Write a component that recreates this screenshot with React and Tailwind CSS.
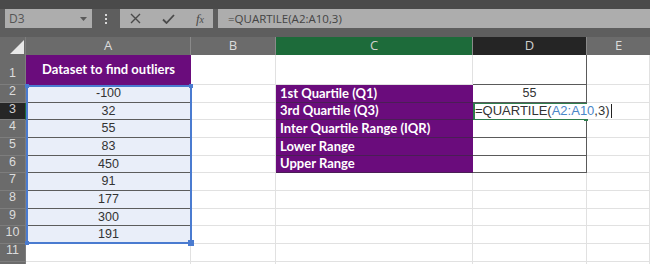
import React from "react";

const HDR = "bg-[#6b6b6b] text-[#dcdcdc]";

function RowHead({ n, dark, h }) {
  return (
    <div
      className={`w-[26px] shrink-0 flex items-end justify-center pb-[1px] border-b border-r border-[#7d7d7d] text-[12.5px] ${
        dark ? "bg-[#262626] text-[#d0d0d0] border-r-[#1d6b3a]" : HDR
      } ${h}`}
    >
      {n}
    </div>
  );
}

const gridCell = "border-b border-r border-[#e1e1e1] bg-white";
const A_CELL = "w-[165px] shrink-0 bg-[#e9eef9] border-b border-[#5c5c5c] flex items-center justify-center text-[12.5px] text-[#333]";
const PURPLE = "w-[197px] shrink-0 bg-[#6a0c7c] border-b border-[#4a1e55] flex items-center pl-[4px] text-white font-bold text-[13px]";
const D_BOX = "w-[114px] shrink-0 bg-white border-b border-r border-[#5a5a5a] flex items-center justify-center text-[12.5px] text-[#333]";

export default function App() {
  const data = ["-100", "32", "55", "83", "450", "91", "177", "300", "191"];
  const cLabels = [
    "1st Quartile (Q1)",
    "3rd Quartile (Q3)",
    "Inter Quartile Range (IQR)",
    "Lower Range",
    "Upper Range",
  ];
  const rh = "h-[17.67px]";
  return (
    <div
      className="w-[650px] h-[264px] overflow-hidden bg-white relative flex flex-col"
      style={{ fontFamily: '"Liberation Sans", Arial, sans-serif' }}
    >
      {/* top strip */}
      <div className="h-[9px] bg-[#4a4a4a] shrink-0" />
      {/* formula bar */}
      <div className="h-[28px] bg-[#5e5e5e] shrink-0 flex items-start">
        <div className="ml-[5px] w-[87px] h-[19px] bg-[#adadad] flex items-center justify-between pl-[4px] pr-[5px]">
          <span className="text-[12px] text-[#555]" style={{ fontFamily: '"Open Sans", sans-serif' }}>D3</span>
          <svg width="7" height="4" viewBox="0 0 7 4"><path d="M0 0h7L3.5 4z" fill="#5a5a5a" /></svg>
        </div>
        <div className="w-[28px] h-[19px] flex flex-col items-center justify-center gap-[2px]">
          <div className="w-[2px] h-[2px] bg-[#d8d8d8]" />
          <div className="w-[2px] h-[2px] bg-[#d8d8d8]" />
          <div className="w-[2px] h-[2px] bg-[#d8d8d8]" />
        </div>
        <div className="w-[93px] h-[19px] bg-[#adadad] flex items-center justify-between pl-[10px] pr-[9px]">
          <svg width="11" height="11" viewBox="0 0 11 11"><path d="M1 1L10 10M10 1L1 10" stroke="#4a4a4a" strokeWidth="1.4" /></svg>
          <svg width="13" height="10" viewBox="0 0 13 10"><path d="M1 5.5L4.5 9L12 1" stroke="#4a4a4a" strokeWidth="1.8" fill="none" /></svg>
          <span className="text-[13px] italic text-[#4a4a4a]" style={{ fontFamily: '"Liberation Serif", serif' }}>f<span className="text-[10px]">x</span></span>
        </div>
        <div className="ml-[5px] flex-1 h-[19px] bg-[#adadad] flex items-center pl-[10px] text-[11.5px] text-[#444]" style={{ fontFamily: '"Open Sans", sans-serif' }}>
          =QUARTILE(A2:A10,3)
        </div>
      </div>
      {/* column headers */}
      <div className="h-[18px] shrink-0 flex text-[13px]" style={{ fontFamily: '"Open Sans", sans-serif' }}>
        <div className={`w-[26px] ${HDR} border-r border-[#7d7d7d] flex items-end justify-end p-[1px]`}>
          <svg width="14" height="14" viewBox="0 0 14 14"><path d="M14 0V14H0z" fill="#e8e8e8" /></svg>
        </div>
        <div className={`w-[165px] ${HDR} border-r border-[#8a8a8a] flex items-center justify-center`}>A</div>
        <div className={`w-[85px] ${HDR} border-r border-[#8a8a8a] flex items-center justify-center`}>B</div>
        <div className="w-[197px] bg-[#1d6b3a] text-[#cfcfcf] border-r border-[#8a8a8a] flex items-center justify-center">C</div>
        <div className="w-[114px] bg-[#252525] text-[#cfcfcf] border-r border-[#8a8a8a] flex items-center justify-center">D</div>
        <div className={`w-[63px] ${HDR} flex items-center justify-center`}>E</div>
      </div>
      {/* row 1 */}
      <div className="h-[30px] shrink-0 flex">
        <RowHead n="1" h="h-[30px]" />
        <div className="w-[165px] shrink-0 bg-[#6a0c7c] flex items-center justify-center text-white font-bold text-[13px]" style={{ fontFamily: "Lato, sans-serif" }}>
          Dataset to find outliers
        </div>
        <div className={`w-[85px] shrink-0 ${gridCell}`} />
        <div className={`w-[197px] shrink-0 ${gridCell}`} />
        <div className={`w-[114px] shrink-0 bg-white border-b border-r border-[#5a5a5a]`} />
        <div className={`w-[63px] shrink-0 ${gridCell}`} />
      </div>
      {/* rows 2-10 */}
      {data.map((v, i) => {
        const r = i + 2;
        const ci = r - 2;
        return (
          <div key={r} className={`${rh} shrink-0 flex`}>
            <RowHead n={r} dark={r === 3} h={rh} />
            <div className={A_CELL}>{v}</div>
            <div className={`w-[85px] shrink-0 ${gridCell}`} />
            {ci < 5 ? (
              <div className={PURPLE} style={{ fontFamily: "Lato, sans-serif" }}>{cLabels[ci]}</div>
            ) : (
              <div className={`w-[197px] shrink-0 ${gridCell}`} />
            )}
            {ci === 0 ? (
              <div className={D_BOX}>55</div>
            ) : ci === 1 ? (
              <div className="w-[114px] shrink-0 bg-white border-2 border-[#2f7d4d] flex items-center relative z-10">
                <span className="absolute left-[0px] top-[-1px] h-[15px] flex items-center whitespace-nowrap bg-white text-[13px] text-[#333] pr-[1px] z-20">
                  =QUARTILE(<span className="text-[#4a86c8]">A2:A10</span>,3)
                  <span className="inline-block w-[1px] h-[14px] bg-[#222] ml-[1px]" />
                </span>
                <div className="absolute right-[-3px] bottom-[-3px] w-[4px] h-[4px] bg-[#2f7d4d]" />
              </div>
            ) : ci < 5 ? (
              <div className={D_BOX} />
            ) : (
              <div className={`w-[114px] shrink-0 ${gridCell}`} />
            )}
            <div className={`w-[63px] shrink-0 ${gridCell}`} />
          </div>
        );
      })}
      {[11, ""].map((r, k) => (
        <div key={k} className={`${rh} shrink-0 flex`}>
          <RowHead n={r} h={rh} />
          <div className={`w-[165px] shrink-0 ${gridCell}`} />
          <div className={`w-[85px] shrink-0 ${gridCell}`} />
          <div className={`w-[197px] shrink-0 ${gridCell}`} />
          <div className={`w-[114px] shrink-0 ${gridCell}`} />
          <div className={`w-[63px] shrink-0 ${gridCell}`} />
        </div>
      ))}
      {/* selection overlay A2:A10 */}
      <div className="absolute left-[26px] top-[85px] w-[166px] h-[159px] border-2 border-[#4a7bd0] pointer-events-none">
        <div className="absolute left-[-3px] top-[-3px] w-[4px] h-[4px] bg-[#4a7bd0]" />
        <div className="absolute right-[-3px] top-[-3px] w-[4px] h-[4px] bg-[#4a7bd0]" />
        <div className="absolute left-[-3px] bottom-[-3px] w-[4px] h-[4px] bg-[#4a7bd0]" />
        <div className="absolute right-[-4px] bottom-[-4px] w-[6px] h-[6px] bg-[#4a7bd0]" />
      </div>
    </div>
  );
}
